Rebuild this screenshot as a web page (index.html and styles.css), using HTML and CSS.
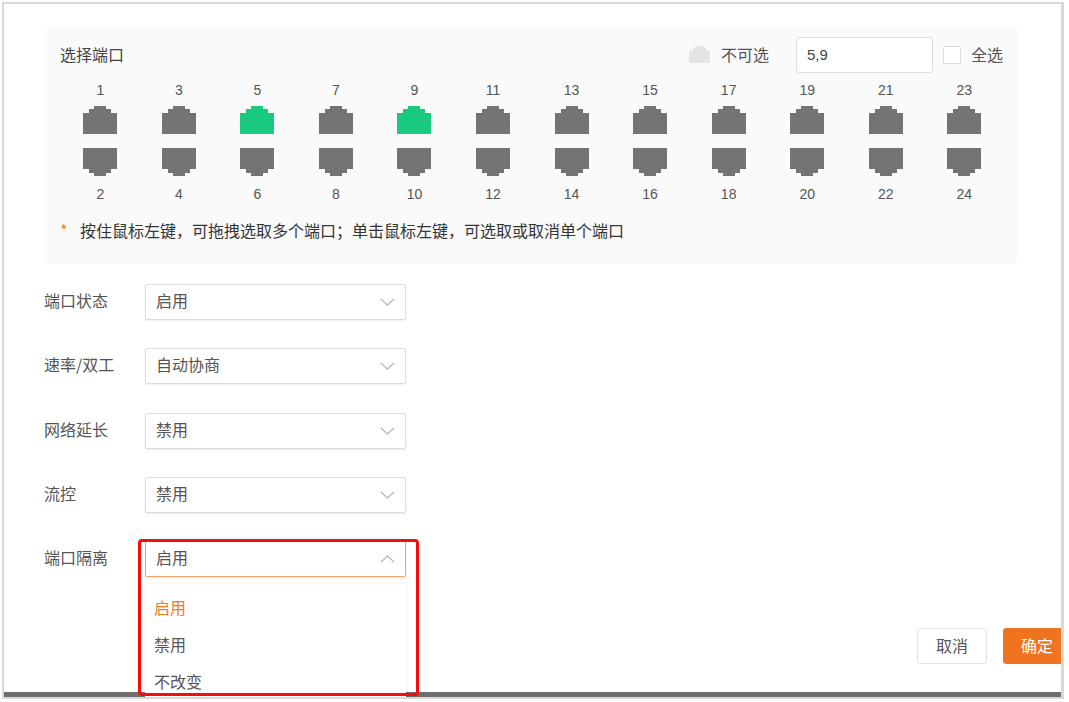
FILE: index.html
```html
<!DOCTYPE html>
<html lang="zh">
<head>
<meta charset="utf-8">
<title>选择端口</title>
<link rel="stylesheet" href="styles.css">
</head>
<body>
<svg class="defs" width="0" height="0" aria-hidden="true">
  <symbol id="rj45" viewBox="0 0 34 28"><path d="M11 0H23V3H28V7H34V28H0V7H6V3H11Z"/></symbol>
  <symbol id="chev-down" viewBox="0 0 16 8"><path d="M1 .7 8 7.3 15 .7" fill="none" stroke="currentColor" stroke-width="1.2"/></symbol>
  <symbol id="chev-up" viewBox="0 0 16 8"><path d="M1 7.3 8 .7 15 7.3" fill="none" stroke="currentColor" stroke-width="1.2"/></symbol>
</svg>
<div class="frame">
  <div class="content">
    <section class="panel">
      <header class="panel-head">
        <span class="panel-title">选择端口</span>
        <div class="panel-tools">
          <svg class="legend-icon"><use href="#rj45"/></svg>
          <span class="legend-text">不可选</span>
          <input class="port-input" type="text" value="5,9">
          <span class="checkbox"></span>
          <span class="all-text">全选</span>
        </div>
      </header>
      <div class="ports">
        <div class="port"><span class="num">1</span><svg class="ico"><use href="#rj45"/></svg><svg class="ico flip"><use href="#rj45"/></svg><span class="num">2</span></div>
        <div class="port"><span class="num">3</span><svg class="ico"><use href="#rj45"/></svg><svg class="ico flip"><use href="#rj45"/></svg><span class="num">4</span></div>
        <div class="port"><span class="num">5</span><svg class="ico on"><use href="#rj45"/></svg><svg class="ico flip"><use href="#rj45"/></svg><span class="num">6</span></div>
        <div class="port"><span class="num">7</span><svg class="ico"><use href="#rj45"/></svg><svg class="ico flip"><use href="#rj45"/></svg><span class="num">8</span></div>
        <div class="port"><span class="num">9</span><svg class="ico on"><use href="#rj45"/></svg><svg class="ico flip"><use href="#rj45"/></svg><span class="num">10</span></div>
        <div class="port"><span class="num">11</span><svg class="ico"><use href="#rj45"/></svg><svg class="ico flip"><use href="#rj45"/></svg><span class="num">12</span></div>
        <div class="port"><span class="num">13</span><svg class="ico"><use href="#rj45"/></svg><svg class="ico flip"><use href="#rj45"/></svg><span class="num">14</span></div>
        <div class="port"><span class="num">15</span><svg class="ico"><use href="#rj45"/></svg><svg class="ico flip"><use href="#rj45"/></svg><span class="num">16</span></div>
        <div class="port"><span class="num">17</span><svg class="ico"><use href="#rj45"/></svg><svg class="ico flip"><use href="#rj45"/></svg><span class="num">18</span></div>
        <div class="port"><span class="num">19</span><svg class="ico"><use href="#rj45"/></svg><svg class="ico flip"><use href="#rj45"/></svg><span class="num">20</span></div>
        <div class="port"><span class="num">21</span><svg class="ico"><use href="#rj45"/></svg><svg class="ico flip"><use href="#rj45"/></svg><span class="num">22</span></div>
        <div class="port"><span class="num">23</span><svg class="ico"><use href="#rj45"/></svg><svg class="ico flip"><use href="#rj45"/></svg><span class="num">24</span></div>
      </div>
      <p class="hint"><span class="star">*</span>按住鼠标左键&#65292;可拖拽选取多个端口&#65307;单击鼠标左键&#65292;可选取或取消单个端口</p>
    </section>

    <div class="form">
      <div class="row"><span class="label">端口状态</span><div class="select"><span class="value">启用</span><svg class="chev"><use href="#chev-down"/></svg></div></div>
      <div class="row"><span class="label">速率/双工</span><div class="select"><span class="value">自动协商</span><svg class="chev"><use href="#chev-down"/></svg></div></div>
      <div class="row"><span class="label">网络延长</span><div class="select"><span class="value">禁用</span><svg class="chev"><use href="#chev-down"/></svg></div></div>
      <div class="row"><span class="label">流控</span><div class="select"><span class="value">禁用</span><svg class="chev"><use href="#chev-down"/></svg></div></div>
      <div class="row"><span class="label">端口隔离</span>
        <div class="select open"><span class="value">启用</span><svg class="chev"><use href="#chev-up"/></svg>
          <ul class="menu">
            <li class="active">启用</li>
            <li>禁用</li>
            <li>不改变</li>
          </ul>
          <div class="callout"></div>
        </div>
      </div>
    </div>

    <div class="actions">
      <button class="btn" type="button">取消</button>
      <button class="btn primary" type="button">确定</button>
    </div>
  </div>
</div>
</body>
</html>
```

FILE: styles.css
```css
* { box-sizing: border-box; }
html, body { margin: 0; height: 100%; background: #fff; overflow: hidden; }
body {
  font-family: "Noto Sans CJK SC", "Liberation Sans", sans-serif;
  font-size: 16px;
  color: #555;
}
.defs { position: absolute; }

.frame {
  width: 1062px;
  height: 697px;
  margin: 2px 0 0 2px;
  border: 2px solid #d9d9d9;
  border-right-width: 3px;
  overflow: hidden;
}
.content {
  height: 100%;
  padding-left: 40px;
  border-bottom: 5px solid #6e6e6e;
  display: flex;
  flex-direction: column;
}

.panel {
  width: 974px;
  height: 237px;
  margin-top: 23px;
  padding: 10px 15px 0 16px;
  background: #fafafa;
  border-radius: 6px;
  flex: none;
}
.panel-head { display: flex; align-items: center; justify-content: space-between; height: 35px; }
.panel-title { color: #444; padding-bottom: 2px; }
.panel-tools { display: flex; align-items: center; }
.legend-icon { width: 21px; height: 17px; fill: #e4e4e4; }
.legend-text { margin-left: 11px; padding-bottom: 2px; }
.port-input {
  width: 137px;
  height: 36px;
  margin-left: 27px;
  padding: 0 10px;
  border: 1px solid #dedede;
  border-radius: 3px;
  background: #fff;
  font: 15px "Liberation Sans", sans-serif;
  color: #444;
}
.checkbox {
  width: 18px;
  height: 18px;
  margin-left: 10px;
  border: 1px solid #dcdcdc;
  background: #fff;
  border-radius: 2px;
}
.all-text { margin-left: 10px; padding-bottom: 2px; }

.ports {
  display: grid;
  grid-template-columns: repeat(12, 78.55px);
  margin-top: 9px;
  margin-left: 1px;
}
.port { display: flex; flex-direction: column; align-items: center; }
.num { font: 14px/18px "Liberation Sans", sans-serif; color: #555; }
.ico { width: 34px; height: 28px; margin-top: 7px; fill: #747474; }
.ico + .ico { margin-top: 13.7px; margin-bottom: 9.3px; }
.ico.on { fill: #19c97f; }
.ico.flip { transform: scaleY(-1); }

.hint { margin: 17px 0 0; line-height: 20px; color: #333; }
.star { display: inline-block; width: 20px; color: #f47a20; }

.form { display: flex; flex-direction: column; gap: 28.3px; margin-top: 20px; }
.row { display: flex; align-items: center; height: 36px; }
.label { width: 101px; color: #555; padding-bottom: 4px; }
.select {
  position: relative;
  width: 261px;
  height: 36px;
  padding: 0 10px;
  display: flex;
  align-items: center;
  justify-content: space-between;
  background: #fff;
  border: 1px solid #dcdcdc;
  border-radius: 2px;
  box-shadow: 0 1px 2px rgba(0, 0, 0, .08);
}
.value { padding-bottom: 4px; }
.select.open { border-color: #f6a26c; }
.chev { width: 15px; height: 8px; color: #a6a6a6; }

.menu {
  position: absolute;
  left: -1px;
  top: 42px;
  width: 261px;
  height: 130px;
  margin: 0;
  padding: 5px 0 0;
  list-style: none;
  background: #fff;
  box-shadow: 0 0 4px rgba(0, 0, 0, .08);
  z-index: 2;
}
.menu li { height: 36.7px; line-height: 36.7px; padding-left: 9px; }
.menu .active { color: #f47a20; }

.callout {
  position: absolute;
  left: -8px;
  top: -3.5px;
  width: 281px;
  height: 157px;
  border: 3px solid #f50d0d;
  border-radius: 4px;
  z-index: 3;
}

.actions { display: flex; justify-content: flex-end; gap: 16px; margin-top: 51px; }
.btn {
  width: 70px;
  height: 36px;
  padding: 0 0 3px;
  font: inherit;
  color: #555;
  background: #fff;
  border: 1px solid #e2e2e2;
  border-radius: 3px;
  flex: none;
}
.btn.primary { width: 68px; margin-right: -10px; color: #fff; background: #f07320; border-color: #f07320; }
```
